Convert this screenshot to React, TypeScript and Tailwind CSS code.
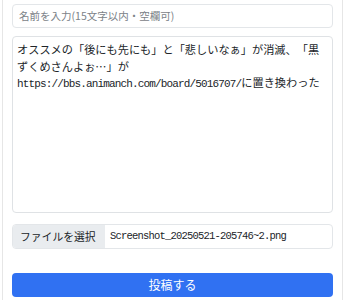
import React from "react";

export default function App() {
  const jp = { fontFamily: '"Noto Sans CJK JP", "Noto Sans", sans-serif' };
  const mono = { fontFamily: '"Liberation Mono", "Noto Sans CJK JP", monospace' };
  return (
    <div className="h-[300px] w-[345px] overflow-hidden bg-white [text-spacing-trim:space-all]" style={jp}>
      <div className="mx-[2px] h-full border-x border-[#e6e6e6] px-[9px] pt-[4px]">
        <div className="flex h-[24px] items-center whitespace-nowrap rounded-[4px] border border-[#e3e6e9] px-[6px] text-[10.5px] text-[#7c8288]">
          名前を入力(15文字以内・空欄可)
        </div>
        <div className="mt-[8px] h-[177px] whitespace-nowrap rounded-[4px] border border-[#dfe2e5] px-[4px] pt-[4px] text-[11.2px] leading-[16.5px] text-[#212529]">
          <div>オススメの「後にも先にも」と「悲しいなぁ」が消滅、「黒</div>
          <div>ずくめさんよぉ…」が</div>
          <div>
            <span className="text-[11px] tracking-[-0.85px]" style={mono}>https://bbs.animanch.com/board/5016707/</span>
            に置き換わった
          </div>
        </div>
        <div className="mt-[11px] flex h-[25px] overflow-hidden whitespace-nowrap rounded-[4px] border border-[#e3e6e9] text-[10.8px] text-[#212529]">
          <div className="flex w-[92px] items-center bg-[#e9ecef] px-[7px]">ファイルを選択</div>
          <div className="flex items-center pl-[5px]">
            <span className="text-[10.5px] tracking-[-0.8px]" style={mono}>Screenshot_20250521-205746~2.png</span>
          </div>
        </div>
        <div className="mt-[24px] flex h-[24px] items-center justify-center rounded-[4px] bg-[#3071f2] text-[12px] text-white">
          投稿する
        </div>
      </div>
    </div>
  );
}
